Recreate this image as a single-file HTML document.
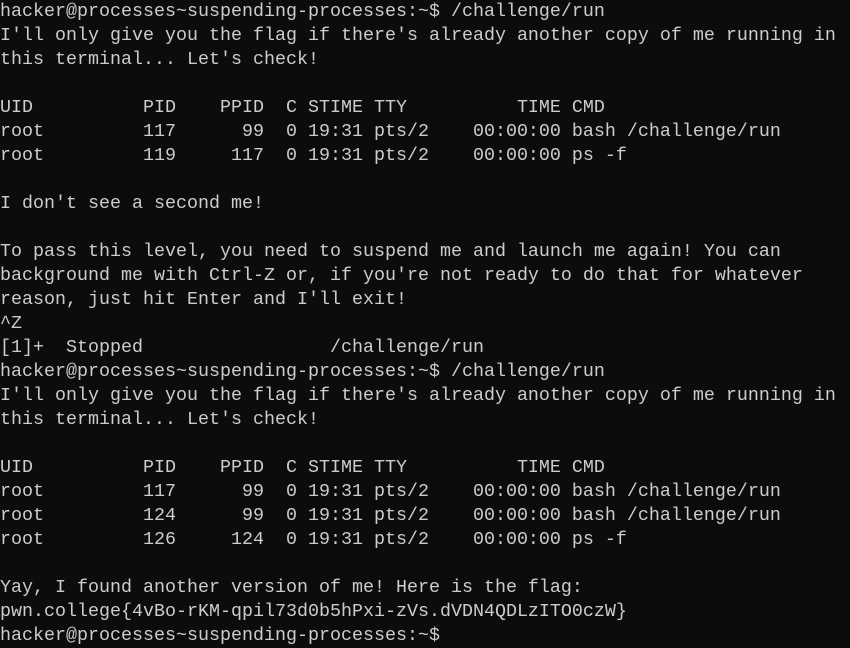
<!DOCTYPE html>
<html><head><style>
html,body{margin:0;padding:0;background:#0c0c0c;width:850px;height:646px;overflow:hidden}
pre{margin:0;position:absolute;left:0;top:0px;font-family:"Liberation Mono",monospace;font-size:18.33px;line-height:24px;color:#cccccc;white-space:pre}
</style></head><body><pre>hacker@processes~suspending-processes:~$ /challenge/run
I'll only give you the flag if there's already another copy of me running in
this terminal... Let's check!

UID          PID    PPID  C STIME TTY          TIME CMD
root         117      99  0 19:31 pts/2    00:00:00 bash /challenge/run
root         119     117  0 19:31 pts/2    00:00:00 ps -f

I don't see a second me!

To pass this level, you need to suspend me and launch me again! You can
background me with Ctrl-Z or, if you're not ready to do that for whatever
reason, just hit Enter and I'll exit!
^Z
[1]+  Stopped                 /challenge/run
hacker@processes~suspending-processes:~$ /challenge/run
I'll only give you the flag if there's already another copy of me running in
this terminal... Let's check!

UID          PID    PPID  C STIME TTY          TIME CMD
root         117      99  0 19:31 pts/2    00:00:00 bash /challenge/run
root         124      99  0 19:31 pts/2    00:00:00 bash /challenge/run
root         126     124  0 19:31 pts/2    00:00:00 ps -f

Yay, I found another version of me! Here is the flag:
pwn.college{4vBo-rKM-qpil73d0b5hPxi-zVs.dVDN4QDLzITO0czW}
hacker@processes~suspending-processes:~$ </pre></body></html>
